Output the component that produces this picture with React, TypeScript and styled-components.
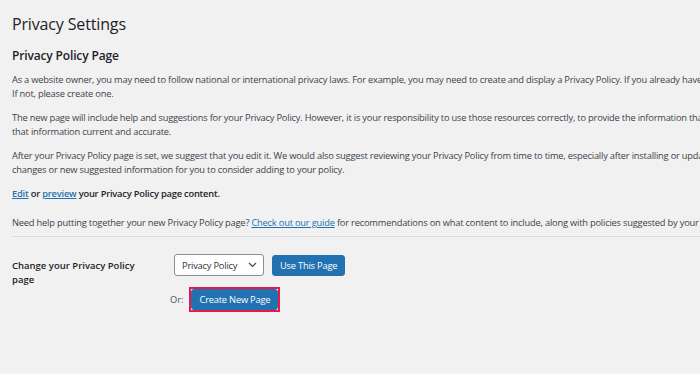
import React from "react";
import styled, { createGlobalStyle } from "styled-components";

const Global = createGlobalStyle`
  html, body { margin: 0; padding: 0; }
  body {
    background: #f1f1f1;
    overflow: hidden;
    width: 700px;
    height: 374px;
    font-family: "Open Sans", "Noto Sans", sans-serif;
    color: #3c434a;
  }
`;

const Page = styled.div`
  padding: 13px 0 0 12px;
  width: 688px;
`;

const Title = styled.h1`
  margin: 0;
  font-size: 16px;
  font-weight: 400;
  letter-spacing: -0.15px;
  line-height: 22px;
  color: #1d2327;
`;

const Subtitle = styled.h2`
  margin: 12px 0 0;
  font-size: 12px;
  font-weight: 600;
  letter-spacing: -0.15px;
  line-height: 18px;
  color: #1d2327;
`;

const Para = styled.p<{ $gap?: number }>`
  margin: ${(p) => p.$gap ?? 10}px 0 0;
  font-size: 9.3px;
  letter-spacing: -0.2px;
  line-height: 14px;
  white-space: nowrap;
  overflow: hidden;
`;

const Strong = styled.strong`
  font-weight: 600;
  color: #1d2327;
`;

const Link = styled.a`
  color: #2271b1;
  text-decoration: underline;
`;

const Rule = styled.hr`
  border: 0;
  border-top: 1px solid #dcdcde;
  margin: 6px 0 0;
  width: 688px;
`;

const FormRow = styled.div`
  display: flex;
  margin-top: 17px;
`;

const Label = styled.div`
  width: 162px;
  font-size: 9.5px;
  font-weight: 600;
  line-height: 14px;
  color: #1d2327;
  padding-top: 5px;
`;

const Controls = styled.div`
  display: flex;
  flex-direction: column;
  gap: 11px;
`;

const Line = styled.div<{ $indent?: number; $gap?: number }>`
  display: flex;
  align-items: center;
  gap: ${(p) => p.$gap ?? 8}px;
  margin-left: ${(p) => p.$indent ?? 0}px;
`;

const Select = styled.div`
  box-sizing: border-box;
  width: 90px;
  height: 22px;
  border: 1px solid #8c8f94;
  border-radius: 3px;
  background: #fff;
  display: flex;
  align-items: center;
  justify-content: space-between;
  padding: 0 6px 0 7px;
  font-size: 9.3px;
  letter-spacing: -0.2px;
  color: #2c3338;
`;

const Button = styled.button`
  box-sizing: border-box;
  height: 21px;
  padding: 0 7px;
  border: 1px solid #2271b1;
  border-radius: 3px;
  background: #2271b1;
  color: #fff;
  font-family: inherit;
  font-size: 9.3px;
  letter-spacing: -0.2px;
  line-height: 19px;
  cursor: pointer;
`;

const Highlight = styled.div`
  border: 2px solid #e5194a;
  display: flex;
`;

const OrText = styled.span`
  font-size: 9.3px;
  color: #50575e;
`;

const Chevron = () => (
  <svg width="9" height="6" viewBox="0 0 9 6" fill="none">
    <path d="M1 1l3.5 3.5L8 1" stroke="#3c434a" strokeWidth="1.2" />
  </svg>
);

export default function App() {
  return (
    <>
      <Global />
      <Page>
        <Title>Privacy Settings</Title>
        <Subtitle>Privacy Policy Page</Subtitle>
        <Para $gap={8}>
          As a website owner, you may need to follow national or international privacy laws. For example, you may need to create and display a Privacy Policy. If you already have a Privacy Policy page, please select it below.
          <br />
          If not, please create one.
        </Para>
        <Para>
          The new page will include help and suggestions for your Privacy Policy. However, it is your responsibility to use those resources correctly, to provide the information that your Privacy Policy requires, and to keep
          <br />
          that information current and accurate.
        </Para>
        <Para>
          After your Privacy Policy page is set, we suggest that you edit it. We would also suggest reviewing your Privacy Policy from time to time, especially after installing or updating any themes or plugins. There may be
          <br />
          changes or new suggested information for you to consider adding to your policy.
        </Para>
        <Para>
          <Strong>
            <Link href="#">Edit</Link> or <Link href="#">preview</Link> your Privacy Policy page content.
          </Strong>
        </Para>
        <Para $gap={15}>
          Need help putting together your new Privacy Policy page? <Link href="#">Check out our guide</Link> for recommendations on what content to include, along with policies suggested by your plugins and theme.
        </Para>
        <Rule />
        <FormRow>
          <Label>
            Change your Privacy Policy
            <br />
            page
          </Label>
          <Controls>
            <Line>
              <Select>
                Privacy Policy <Chevron />
              </Select>
              <Button>Use This Page</Button>
            </Line>
            <Line $indent={-4} $gap={6}>
              <OrText>Or:</OrText>
              <Highlight>
                <Button>Create New Page</Button>
              </Highlight>
            </Line>
          </Controls>
        </FormRow>
      </Page>
    </>
  );
}
